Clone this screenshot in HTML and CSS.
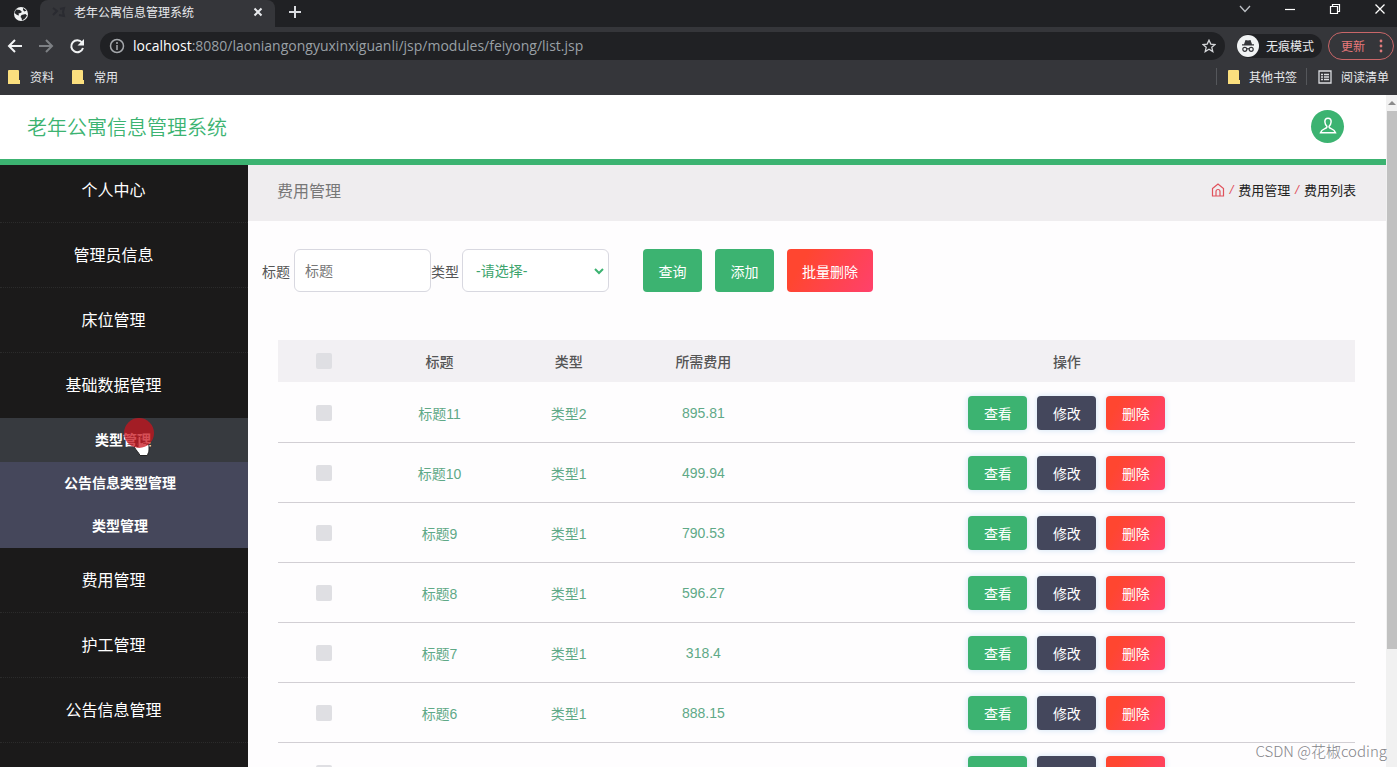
FILE: index.html
```
<!DOCTYPE html>
<html lang="zh-CN">
<head>
    <meta charset="UTF-8">
    <meta name="viewport" content="width=device-width, initial-scale=1.0">
    <title>老年公寓信息管理系统</title>
    <link rel="stylesheet" href="styles.css">
</head>
<body>
    <div class="browser">
        <!-- Tab strip -->
        <div class="tabs">
            <button class="tab-pinned" aria-label="固定标签页">
                <svg width="16" height="16" viewBox="0 0 16 16"><circle cx="8" cy="8" r="7" fill="#f1f3f4"/><path d="M3 3.500l4 .5 2 2-1.500 1-2 .5.5 2-2-.5L1.500 7zM10 2l3.500 2.500-2 1L10 4zM8.500 9l4-1 1.500 1.500-2 3-3 2-.5-2.500-1-1z" fill="#25272a"/></svg>
            </button>
            <div class="tab">
                <svg width="14" height="12" viewBox="0 0 14 12" fill="none" stroke="#2a2b31" stroke-width="2"><path d="M1 2l4 3-4 4M8 3l4-1-1 4 1 4-5-1"/></svg>
                <span class="tab-title">老年公寓信息管理系统</span>
                <button class="icon-btn" aria-label="关闭标签页">
                    <svg width="10" height="10" viewBox="0 0 10 10" stroke="#e8eaed" stroke-width="2"><path d="M1.500 1.500l7 7M8.500 1.500l-7 7"/></svg>
                </button>
            </div>
            <button class="icon-btn tab-new" aria-label="新标签页">
                <svg width="12" height="12" viewBox="0 0 12 12" stroke="#dadce0" stroke-width="2"><path d="M6 0v12M0 6h12"/></svg>
            </button>
            <div class="window-buttons">
                <button class="icon-btn" aria-label="搜索标签页"><svg width="12" height="12" viewBox="0 0 12 12" fill="none" stroke="#bdc1c6" stroke-width="1.300"><path d="M1 3l5 5.500L11 3"/></svg></button>
                <button class="icon-btn" aria-label="最小化"><svg width="12" height="12" viewBox="0 0 12 12" stroke="#fff" stroke-width="1.200"><path d="M1 6.500h10"/></svg></button>
                <button class="icon-btn" aria-label="还原"><svg width="12" height="12" viewBox="0 0 12 12" fill="none" stroke="#fff" stroke-width="1.200"><path d="M1.500 3.500h7v7h-7zM3.500 3V1.500h7v7H9"/></svg></button>
                <button class="icon-btn" aria-label="关闭"><svg width="12" height="12" viewBox="0 0 12 12" stroke="#fff" stroke-width="1.300"><path d="M1.500 1.500l9 9M10.500 1.500l-9 9"/></svg></button>
            </div>
        </div>

        <!-- Address bar -->
        <div class="toolbar">
            <button class="icon-btn" aria-label="后退"><svg width="16" height="16" viewBox="0 0 16 16" fill="none" stroke="#f1f3f4" stroke-width="2"><path d="M15 8H2M8 2L2 8l6 6"/></svg></button>
            <button class="icon-btn" aria-label="前进"><svg width="16" height="16" viewBox="0 0 16 16" fill="none" stroke="#7d8084" stroke-width="2"><path d="M1 8h13M8 2l6 6-6 6"/></svg></button>
            <button class="icon-btn" aria-label="刷新"><svg width="16" height="16" viewBox="0 0 16 16"><path d="M13 4.500A6 6 0 1 0 14 10" fill="none" stroke="#f1f3f4" stroke-width="2"/><path d="M15 1v6.500H8.500z" fill="#f1f3f4"/></svg></button>
            <div class="address">
                <svg width="16" height="16" viewBox="0 0 16 16" fill="none" stroke="#a5a8ac" stroke-width="1.500"><circle cx="8" cy="8" r="6.500"/><path d="M8 7v5M8 4v2"/></svg>
                <span class="url"><b>localhost</b>:8080/laoniangongyuxinxiguanli/jsp/modules/feiyong/list.jsp</span>
                <button class="icon-btn" aria-label="收藏"><svg width="14" height="14" viewBox="0 0 14 14" fill="none" stroke="#d5d7da" stroke-width="1.300"><path d="M7 1.200l1.800 3.900 4.200.4-3.200 2.800 1 4.300L7 10.300l-3.800 2.300 1-4.300L1 5.500l4.200-.4z"/></svg></button>
            </div>
            <div class="incognito">
                <svg width="22" height="22" viewBox="0 0 22 22"><circle cx="11" cy="11" r="11" fill="#f1f3f4"/><path d="M5 10.500h12v-1.300h-2L13.500 5 11 5.600 8.500 5 7 9.200H5z" fill="#35363a"/><g fill="none" stroke="#35363a" stroke-width="1.200"><circle cx="7.800" cy="14.300" r="2"/><circle cx="14.200" cy="14.300" r="2"/><path d="M9.800 14q1.200-.8 2.400 0"/></g></svg>
                <span>无痕模式</span>
            </div>
            <button class="update">更新
                <svg width="4" height="14" viewBox="0 0 4 14" fill="#e07b7d"><circle cx="2" cy="2" r="1.400"/><circle cx="2" cy="7" r="1.400"/><circle cx="2" cy="12" r="1.400"/></svg>
            </button>
        </div>

        <!-- Bookmarks -->
        <div class="bookmarks">
            <a href="#"><svg width="12" height="14" viewBox="0 0 12 14"><path d="M0 1q0-1 1-1h9q1 0 1 1v9h1v4H0z" fill="#fbdf7e"/></svg>资料</a>
            <a href="#"><svg width="12" height="14" viewBox="0 0 12 14"><path d="M0 1q0-1 1-1h9q1 0 1 1v9h1v4H0z" fill="#fbdf7e"/></svg>常用</a>
            <div class="bookmarks-right">
                <a href="#"><svg width="12" height="14" viewBox="0 0 12 14"><path d="M0 1q0-1 1-1h9q1 0 1 1v9h1v4H0z" fill="#fbdf7e"/></svg>其他书签</a>
                <a href="#"><svg width="14" height="14" viewBox="0 0 14 14" fill="none" stroke="#dadce0" stroke-width="1.300"><path d="M1 1h12v12H1zM3 4.500h2M6 4.500h5M3 7h2M6 7h5M3 9.500h2M6 9.500h5"/></svg>阅读清单</a>
            </div>
        </div>

        <div class="viewport">
            <div class="page">
                <header class="header">
                    <h1>老年公寓信息管理系统</h1>
                    <button class="avatar" aria-label="用户">
                        <svg width="18" height="18" viewBox="0 0 18 18" fill="none" stroke="#fff" stroke-width="1.500"><path d="M9 1.200C6.700 1.200 5.700 2.900 5.900 5c.2 1.900 1 3.300 1.800 4 .5.600.2 1.500-.5 2C5.500 12 2.500 12.400 1.500 15.800h15c-1-3.400-4-3.800-5.700-4.800-.7-.5-1-1.400-.5-2 .8-.7 1.600-2.100 1.800-4 .2-2.100-.8-3.800-3.100-3.800z"/></svg>
                    </button>
                </header>

                <div class="layout">
                    <nav class="sidebar">
                        <ul class="menu">
                            <li><a href="#">个人中心</a></li>
                            <li><a href="#">管理员信息</a></li>
                            <li><a href="#">床位管理</a></li>
                            <li class="open">
                                <a href="#">基础数据管理</a>
                                <ul class="submenu">
                                    <li><a class="active" href="#">类型管理</a></li>
                                    <li><a href="#">公告信息类型管理</a></li>
                                    <li><a href="#">类型管理</a></li>
                                </ul>
                            </li>
                            <li><a href="#">费用管理</a></li>
                            <li><a href="#">护工管理</a></li>
                            <li><a href="#">公告信息管理</a></li>
                        </ul>
                    </nav>

                    <main class="content">
                        <div class="title-bar">
                            <h2>费用管理</h2>
                            <div class="breadcrumb">
                                <svg width="14" height="14" viewBox="0 0 14 14" fill="none" stroke="#e0525c" stroke-width="1.200"><path d="M1.500 5.500L7 1l5.500 4.500V13h-11zM5 13V8.500a2 2 0 0 1 4 0V13"/></svg>
                                <i>/</i><a href="#">费用管理</a><i>/</i><a href="#">费用列表</a>
                            </div>
                        </div>

                        <form class="search">
                            <label for="title">标题</label>
                            <input type="text" id="title" placeholder="标题">
                            <label for="type">类型</label>
                            <div class="select">
                                <select id="type">
                                    <option>-请选择-</option>
                                    <option>类型1</option>
                                    <option>类型2</option>
                                </select>
                                <svg width="10" height="8" viewBox="0 0 10 8" fill="none" stroke="#3cb371" stroke-width="2"><path d="M1 2l4 4 4-4"/></svg>
                            </div>
                            <div class="search-buttons">
                                <button type="button" class="btn green">查询</button>
                                <button type="button" class="btn green">添加</button>
                                <button type="button" class="btn red">批量删除</button>
                            </div>
                        </form>

                        <table class="list">
                            <thead>
                                <tr>
                                    <th class="col-check"><input type="checkbox" aria-label="全选"></th>
                                    <th class="col-title">标题</th>
                                    <th class="col-type">类型</th>
                                    <th class="col-cost">所需费用</th>
                                    <th>操作</th>
                                </tr>
                            </thead>
                            <tbody id="rows"></tbody>
                        </table>
                    </main>
                </div>
            </div>

            <div class="scrollbar">
                <svg width="8" height="16" viewBox="0 0 8 16" fill="#8a8a8a"><path d="M0 10l4-4 4 4z"/></svg>
                <div class="thumb"></div>
            </div>
        </div>
    </div>

    <svg class="cursor" width="18" height="22" viewBox="0 0 18 22"><path d="M5 12V3c0-2 3-2 3 0v5c1-1 2.500-.8 2.800.5 1-.8 2.500-.4 2.700.8 1.300-.6 2.500.2 2.500 1.700v4c0 2-1 3-1.500 5.500H7C6 18 3 15 1.500 12.500 1 11 3 10 5 12z" fill="#fff" stroke="#222" stroke-width="1"/></svg>
    <div class="click-dot"></div>
    <div class="watermark">CSDN @花椒coding</div>

    <script>
        const rows = [
            ['标题11', '类型2', '895.81'],
            ['标题10', '类型1', '499.94'],
            ['标题9', '类型1', '790.53'],
            ['标题8', '类型1', '596.27'],
            ['标题7', '类型1', '318.4'],
            ['标题6', '类型1', '888.15'],
            ['标题5', '类型1', '']
        ];

        document.getElementById('rows').innerHTML = rows.map(row => `
            <tr>
                <td><input type="checkbox" aria-label="${row[0]}"></td>
                <td>${row[0]}</td>
                <td>${row[1]}</td>
                <td>${row[2]}</td>
                <td>
                    <div class="actions">
                        <button class="btn green">查看</button>
                        <button class="btn dark">修改</button>
                        <button class="btn red">删除</button>
                    </div>
                </td>
            </tr>
        `).join('');
    </script>
</body>
</html>
```
FILE: styles.css
```
* {
    box-sizing: border-box;
}

body {
    margin: 0;
    padding-right: 3px;
    overflow: hidden;
    background: #fff;
    font-family: "Liberation Sans", "Noto Sans CJK SC", sans-serif;
    font-size: 14px;
}

button, input, select {
    font-family: inherit;
    font-size: inherit;
}

a {
    color: inherit;
    text-decoration: none;
}

ul {
    list-style: none;
    margin: 0;
    padding: 0;
}

svg {
    display: block;
    flex: none;
}

.browser {
    display: flex;
    flex-direction: column;
    height: 100vh;
}

.icon-btn {
    display: flex;
    padding: 0;
    border: none;
    background: none;
}

/* Browser bars */
.tabs {
    display: flex;
    align-items: center;
    flex: none;
    height: 27px;
    background: #202124;
    color: #e8eaed;
    font-size: 12px;
}

.tab-pinned {
    display: flex;
    align-items: center;
    width: 40px;
    height: 24px;
    padding: 0 0 0 13px;
    border: none;
    background: none;
}

.tab {
    display: flex;
    align-items: center;
    gap: 8px;
    width: 235px;
    height: 27px;
    padding: 0 12px 4px;
    border-radius: 8px 8px 0 0;
    background: #35363a;
}

.tab-title {
    flex: 1;
}

.tab-new {
    margin-left: 14px;
    padding-bottom: 4px;
}

.window-buttons {
    display: flex;
    gap: 33px;
    height: 18px;
    align-items: center;
    align-self: flex-start;
    margin-left: auto;
    padding-right: 11px;
}

.toolbar {
    display: flex;
    align-items: center;
    flex: none;
    gap: 15px;
    height: 37px;
    padding: 0 3px 0 7px;
    background: #35363a;
    color: #e8eaed;
    font-size: 12px;
}

.address {
    display: flex;
    align-items: center;
    flex: 1;
    gap: 8px;
    height: 28px;
    padding: 0 9px;
    border-radius: 14px;
    background: #202124;
}

.url {
    flex: 1;
    color: #9aa0a6;
    font-family: "Open Sans", "Noto Sans", sans-serif;
    font-size: 14px;
}

.url b {
    color: #fff;
    font-weight: 500;
}

.incognito {
    display: flex;
    align-items: center;
    gap: 7px;
    height: 24px;
    margin-left: -3px;
    padding-right: 8px;
    border-radius: 12px;
    background: #202124;
}

.update {
    display: flex;
    align-items: center;
    gap: 14px;
    height: 28px;
    margin-left: -9px;
    padding: 0 10px 0 12px;
    border: 1px solid #c96668;
    border-radius: 14px;
    background: #35363a;
    color: #e9797b;
}

.bookmarks {
    display: flex;
    align-items: center;
    flex: none;
    gap: 18px;
    height: 31px;
    padding: 0 8px 6px;
    background: #35363a;
    color: #e8eaed;
    font-size: 12px;
}

.bookmarks a {
    display: flex;
    align-items: center;
    gap: 10px;
}

.bookmarks-right {
    display: flex;
    margin-left: auto;
    gap: 9px;
}

.bookmarks-right a {
    gap: 9px;
    padding-left: 11px;
    border-left: 1px solid #55575b;
}

/* Page */
.viewport {
    display: flex;
    flex: 1;
    min-height: 0;
}

.page {
    display: flex;
    flex-direction: column;
    flex: 1;
    min-width: 0;
    overflow: hidden;
}

.scrollbar {
    display: flex;
    flex-direction: column;
    align-items: center;
    width: 11px;
    background: #f1f1f1;
}

.thumb {
    width: 10px;
    height: 80%;
    background: #c1c1c1;
}

.header {
    display: flex;
    align-items: center;
    justify-content: space-between;
    flex: none;
    height: 70px;
    padding: 0 42px 2px 27px;
    border-bottom: 6px solid #3cb371;
    background: #fff;
}

.header h1 {
    margin: 0;
    color: #3cb371;
    font-size: 20px;
    font-weight: 350;
}

.avatar {
    display: flex;
    align-items: center;
    justify-content: center;
    width: 33px;
    height: 33px;
    padding: 0;
    border: none;
    border-radius: 50%;
    background: #3cb371;
}

.layout {
    display: flex;
    flex: 1;
    min-height: 0;
}

.sidebar {
    flex: none;
    width: 248px;
    overflow: hidden;
    background: #1b1a1a;
    color: #fff;
    text-align: center;
}

.menu > li > a {
    display: block;
    padding: 21px 21px 19px 0;
    border-bottom: 1px dotted #2b2b2b;
    font-size: 16px;
    line-height: 24px;
}

.menu > li:first-child > a {
    padding-top: 14px;
}

.menu > .open > a {
    border-bottom-color: transparent;
}

.submenu {
    background: #45475b;
}

.submenu a {
    display: block;
    padding: 0 8px 0 0;
    font-size: 14px;
    font-weight: 700;
    line-height: 43px;
}

.submenu .active {
    padding: 0 2px 0 0;
    background: #373a3f;
    line-height: 44px;
}

.content {
    flex: 1;
    min-width: 0;
    background: #fefdfe;
}

.title-bar {
    display: flex;
    align-items: center;
    justify-content: space-between;
    height: 56px;
    padding: 0 30px 7px 29px;
    background: #efedef;
}

.title-bar h2 {
    margin: 0;
    color: #777;
    font-size: 16px;
    font-weight: 400;
}

.breadcrumb {
    display: flex;
    align-items: center;
    gap: 5px;
    color: #222;
    font-size: 13px;
}

.breadcrumb i {
    color: #e0525c;
}

.search {
    display: flex;
    align-items: center;
    padding: 28px 14px 48px;
    color: #555;
}

.search input {
    width: 137px;
    height: 43px;
    margin-left: 4px;
    padding: 0 10px;
    border: 1px solid #d8d8e0;
    border-radius: 6px;
    background: #fff;
}

.search input::placeholder {
    color: #777;
}

.select {
    position: relative;
    margin-left: 3px;
}

.select select {
    width: 147px;
    height: 43px;
    padding: 0 13px;
    border: 1px solid #d8d8e0;
    border-radius: 6px;
    appearance: none;
    background: #fff;
    color: #3ca46d;
}

.select svg {
    position: absolute;
    top: 18px;
    right: 5px;
    pointer-events: none;
}

.search-buttons {
    display: flex;
    gap: 13px;
    margin-left: 34px;
}

.btn {
    min-width: 59px;
    height: 34px;
    padding: 0 15px;
    border: none;
    border-radius: 4px;
    color: #fff;
}

.search-buttons .btn {
    height: 43px;
}

.green {
    background: #3cb371;
}

.dark {
    background: #44475c;
}

.red {
    background: linear-gradient(120deg, #ff4630 20%, #ff416c);
}

/* Table */
.list {
    width: calc(100% - 61px);
    margin-left: 30px;
    border-collapse: collapse;
    table-layout: fixed;
    text-align: center;
}

.list th {
    height: 42px;
    padding: 0;
    background: #f2f0f3;
    color: #555;
    font-weight: 500;
}

.list td {
    height: 60px;
    padding: 2px 0 0;
    border-bottom: 1px solid #d2cfd4;
    color: #5fa987;
}

.col-check {
    width: 8.5%;
}

.col-title {
    width: 13%;
}

.col-type {
    width: 11%;
}

.col-cost {
    width: 14%;
}

.list input {
    display: block;
    width: 16px;
    height: 16px;
    margin: 0 auto;
    border-radius: 2px;
    appearance: none;
    background: #dfdfe3;
}

.actions {
    display: flex;
    justify-content: center;
    gap: 10px;
}

.actions .btn {
    box-shadow: 0 0 6px #cfe3f5;
}

/* Mouse pointer and watermark, over the page */
.click-dot {
    position: absolute;
    left: 124px;
    top: 418px;
    width: 30px;
    height: 30px;
    border-radius: 50%;
    background: rgba(200, 20, 30, 0.75);
}

.cursor {
    position: absolute;
    left: 133px;
    top: 435px;
}

.watermark {
    position: absolute;
    right: 13px;
    bottom: 6px;
    color: #85858a;
    font-family: "Noto Sans CJK SC", sans-serif;
    font-size: 15px;
    font-weight: 300;
}
```
